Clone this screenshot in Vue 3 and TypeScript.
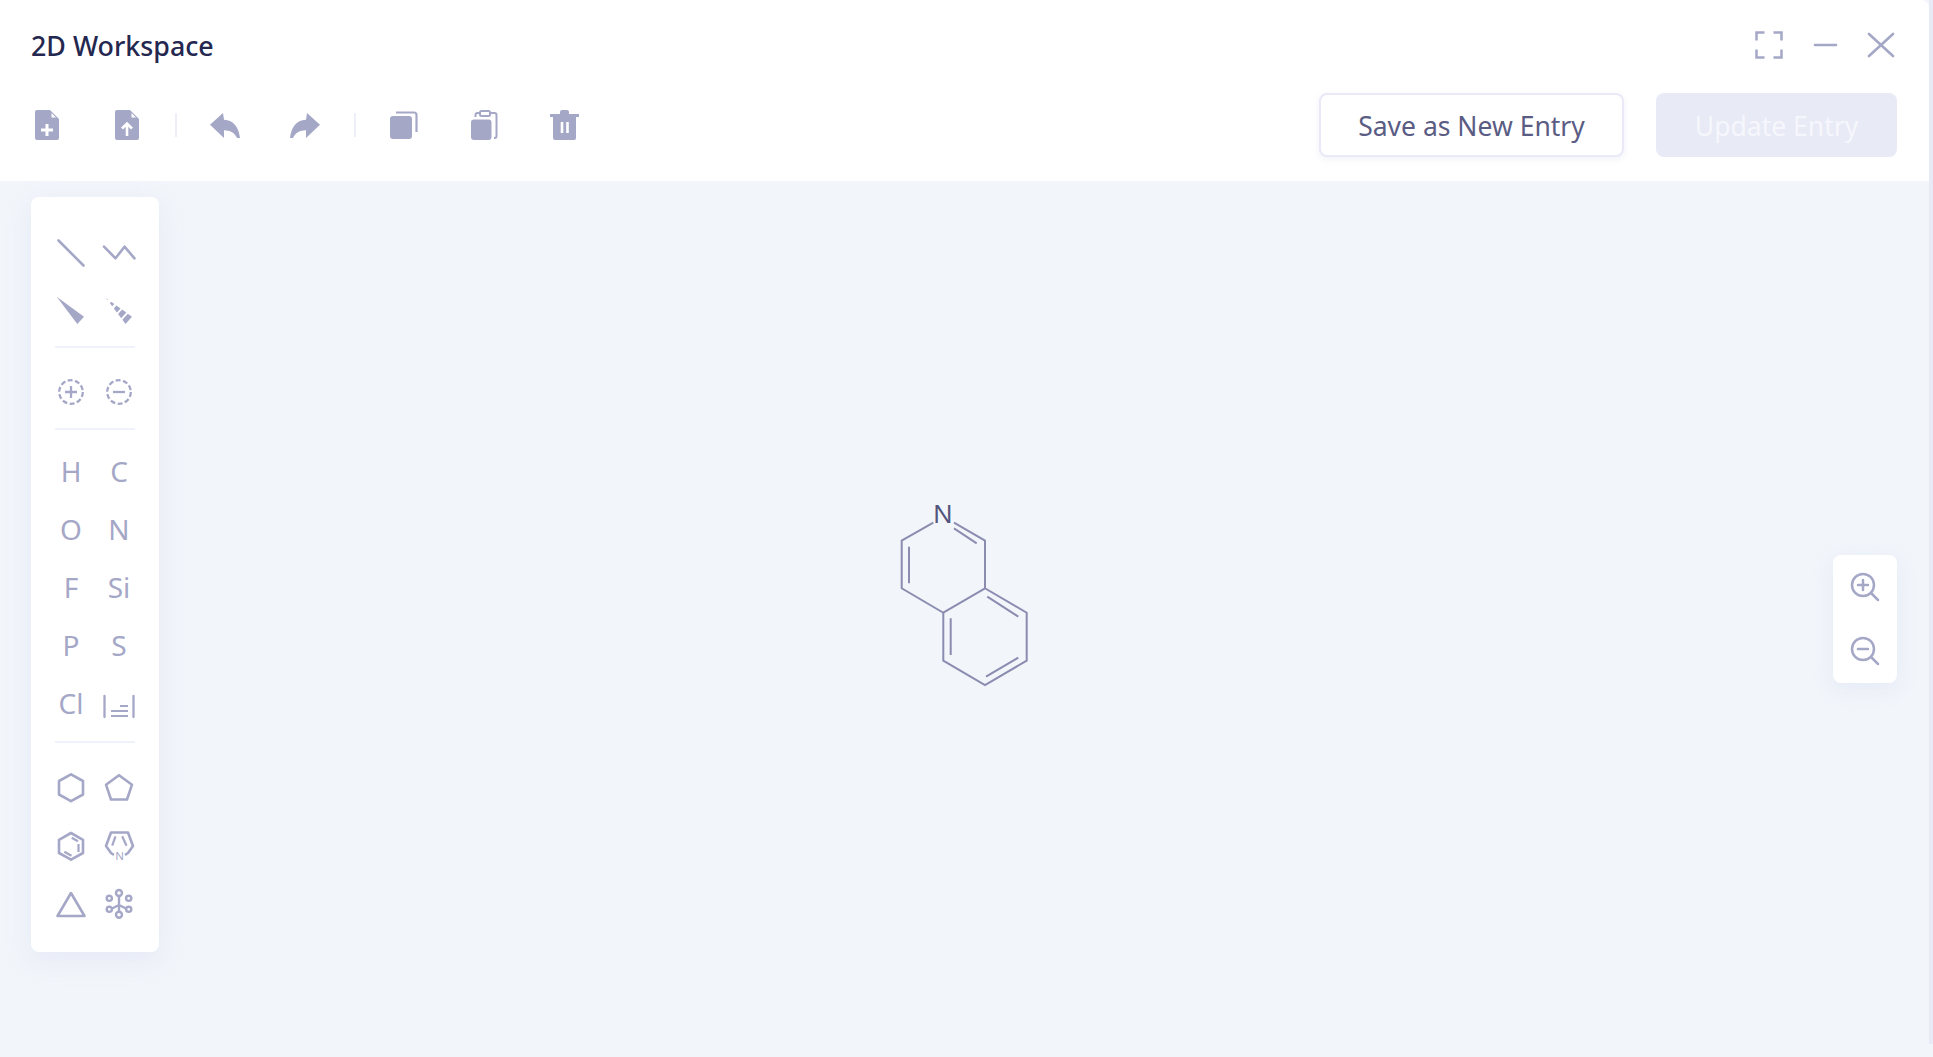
<script setup lang="ts">
const atoms = ['H', 'C', 'O', 'N', 'F', 'Si', 'P', 'S', 'Cl']
</script>

<template>
  <div class="window">
    <div class="pane">
      <header class="head">
        <div class="title-row">
          <h1 class="title">2D Workspace</h1>
          <div class="win-ctl">
            <svg width="28" height="28" viewBox="0 0 28 28" fill="none" stroke="#a5a7c7" stroke-width="2.5">
              <path d="M9.500 1.500H1.500V9.500M18.500 1.500H26.500V9.500M1.500 18.500V26.500H9.500M26.500 18.500V26.500H18.500" />
            </svg>
            <svg width="28" height="28" viewBox="0 0 28 28" fill="none" stroke="#a5a7c7" stroke-width="2.6">
              <path d="M4 14H25" stroke-linecap="round" />
            </svg>
            <svg width="28" height="28" viewBox="0 0 28 28" fill="none" stroke="#a5a7c7" stroke-width="2.6">
              <path d="M2 3L26 25M26 3L2 25" stroke-linecap="round" />
            </svg>
          </div>
        </div>
        <div class="tool-row">
          <div class="tools">
            <button class="tool">
              <svg width="24" height="30" viewBox="0 0 24 30">
                <path fill="#a5a7c7" d="M2 0H15L24 9V28a2 2 0 0 1-2 2H2a2 2 0 0 1-2-2V2a2 2 0 0 1 2-2z" />
                <path fill="#fff" d="M16.500 3L21 7.500H16.500z" />
                <path stroke="#fff" stroke-width="3" d="M12 14V26M6 20H18" />
              </svg>
            </button>
            <button class="tool">
              <svg width="24" height="30" viewBox="0 0 24 30">
                <path fill="#a5a7c7" d="M2 0H15L24 9V28a2 2 0 0 1-2 2H2a2 2 0 0 1-2-2V2a2 2 0 0 1 2-2z" />
                <path fill="#fff" d="M16.500 3L21 7.500H16.500z" />
                <path stroke="#fff" stroke-width="2.6" fill="none" d="M12 26V14M7 18.500L12 13.500L17 18.500" />
              </svg>
            </button>
            <span class="sep first"></span>
            <button class="tool">
              <svg width="30" height="25" viewBox="0 0 30 25">
                <path fill="#a5a7c7" d="M13 0L14 6.700C24 7 29 15 30 25H27C25 20 20 17.300 14 17.300V25L0 11.700z" />
              </svg>
            </button>
            <button class="tool">
              <svg width="30" height="25" viewBox="0 0 30 25">
                <path fill="#a5a7c7" d="M17 0L16 6.700C6 7 1 15 0 25H3C5 20 10 17.300 16 17.300V25L30 11.700z" />
              </svg>
            </button>
            <span class="sep second"></span>
            <button class="tool">
              <svg width="28" height="28" viewBox="0 0 28 28">
                <rect x="0" y="5" width="22" height="23" rx="3" fill="#a5a7c7" />
                <path d="M6 1.500H24A2.500 2.500 0 0 1 26.500 4V21" fill="none" stroke="#a5a7c7" stroke-width="2.2" />
              </svg>
            </button>
            <button class="tool">
              <svg width="27" height="30" viewBox="0 0 27 30">
                <rect x="0" y="9.500" width="20.500" height="20.500" rx="3" fill="#a5a7c7" />
                <path d="M4.500 7V5a2 2 0 0 1 2-2H9M19 3H23.500a2 2 0 0 1 2 2V26a2 2 0 0 1-2 2H23" fill="none" stroke="#a5a7c7" stroke-width="2" />
                <rect x="9" y="1" width="10" height="5" rx="1.500" fill="#fff" stroke="#a5a7c7" stroke-width="2" />
              </svg>
            </button>
            <button class="tool">
              <svg width="29" height="30" viewBox="0 0 29 30">
                <path fill="#a5a7c7" d="M0 4H29V7H0zM10 4V2a2 2 0 0 1 2-2H17a2 2 0 0 1 2 2V4zM3 7H26V28a2 2 0 0 1-2 2H5a2 2 0 0 1-2-2z" />
                <path stroke="#fff" stroke-width="2.600" d="M12 12V23M17.500 12V23" />
              </svg>
            </button>
          </div>
          <div class="actions">
            <button class="btn outline">Save as New Entry</button>
            <button class="btn disabled">Update Entry</button>
          </div>
        </div>
      </header>

      <main class="canvas">
        <aside class="palette">
          <div class="pal-grid">
            <svg class="ic" viewBox="0 0 32 32"><path d="M3.500 3.500L28.500 28.500" stroke="#a5a7c7" stroke-width="2.6" stroke-linecap="round" /></svg>
            <svg class="ic" viewBox="0 0 32 32"><path d="M1 9.700L12.500 21.300L21.500 9.700L31.500 21.300" fill="none" stroke="#a5a7c7" stroke-width="2.6" stroke-linecap="round" stroke-linejoin="round" /></svg>
            <svg class="ic" viewBox="0 0 32 32"><path d="M1.700 1.700L29 21.700L22.300 29z" fill="#a5a7c7" /></svg>
            <svg class="ic" viewBox="0 0 32 32">
              <path d="M3 3L5.080 4.500L4.560 5.080zM8.200 6.740L11.300 9L9.200 11.300L6.900 8.200zM13.400 10.500L17.600 13.500L13.900 17.600L10.800 13.400zM19.100 14.600L23.300 17.600L18.200 23.300L15.100 19.100zM24.800 18.700L29 21.700L22.500 29L19.400 24.800z" fill="#a5a7c7" />
            </svg>
          </div>
          <hr class="rule" />
          <div class="pal-grid">
            <svg class="ic" viewBox="0 0 32 32" fill="none" stroke="#a5a7c7"><circle cx="16" cy="16" r="11.800" stroke-width="2.3" stroke-dasharray="5 2.410" /><path d="M16 10V22M10 16H22" stroke-width="2.300" /></svg>
            <svg class="ic" viewBox="0 0 32 32" fill="none" stroke="#a5a7c7"><circle cx="16" cy="16" r="11.800" stroke-width="2.3" stroke-dasharray="5 2.410" /><path d="M10 16H22" stroke-width="2.300" /></svg>
          </div>
          <hr class="rule to-atoms" />
          <div class="pal-grid">
            <span v-for="a in atoms" :key="a" class="atom">{{ a }}</span>
            <svg class="ic" viewBox="0 0 32 32" fill="none" stroke="#a5a7c7" stroke-width="2.300"><path d="M1.500 9V30M30.500 9V30" stroke-linecap="round" /><path d="M17 19H25M8 24H25M8 29H25" stroke-width="2" /></svg>
          </div>
          <hr class="rule from-atoms" />
          <div class="pal-grid">
            <svg class="ic" viewBox="0 0 32 32" fill="none" stroke="#a5a7c7" stroke-width="2.6"><path d="M16 3.300L28 10V23.500L16 30.200L4 23.500V10z" stroke-linejoin="round" /></svg>
            <svg class="ic" viewBox="0 0 32 32" fill="none" stroke="#a5a7c7" stroke-width="2.6"><path d="M16 4.200L29 13.700L24 28.500H8L3 13.700z" stroke-linejoin="round" /></svg>
            <svg class="ic" viewBox="0 0 32 32" fill="none" stroke="#a5a7c7" stroke-width="2.6"><path d="M16 4L28 10.800V24L16 30.600L4 24V10.800z" stroke-linejoin="round" /><path d="M16.700 8.800L23 12.300M23.500 15V23M9.300 22.700L16.500 26.700" stroke-width="2.2" /></svg>
            <svg class="ic" viewBox="0 0 32 32" fill="none" stroke="#a5a7c7" stroke-width="2.6">
              <path d="M11 26L8 24L3 17L8 3.500H25L30 17L25 24L22 26" stroke-linejoin="round" />
              <path d="M12.500 7.300L9.200 16.700M19.200 7.300L23.500 16.700" stroke-width="2.2" />
              <text x="16.500" y="31" font-size="11.500" text-anchor="middle" fill="#a5a7c7" stroke="none" font-family="Noto Sans, sans-serif">N</text>
            </svg>
            <svg class="ic" viewBox="0 0 32 32" fill="none" stroke="#a5a7c7" stroke-width="2.6"><path d="M16 6L29.500 29H2.500z" stroke-linejoin="round" /></svg>
            <svg class="ic" viewBox="0 0 32 32" fill="none" stroke="#a5a7c7" stroke-width="2.4">
              <circle cx="16" cy="6" r="3" />
              <circle cx="16" cy="27.700" r="3" />
              <circle cx="6.300" cy="11.300" r="2.600" />
              <circle cx="6.300" cy="22.300" r="2.600" />
              <circle cx="25.700" cy="11.300" r="2.600" />
              <circle cx="25.700" cy="22.300" r="2.600" />
              <path d="M16 9V24.700M16 18L9 21.500M16 18L23 21.500" />
            </svg>
          </div>
        </aside>

        <svg class="molecule" width="130" height="190" viewBox="0 0 130 190" fill="none" stroke="#8a8cb0" stroke-width="2">
          <path d="M33.300 22.700L1.700 40.700V88.300L43.300 112.700V160.700L85 185L126.700 160.700V112.700L85 88.300V40.700L54 22.700M43.300 112.700L85 88.300" />
          <path d="M9 46.700V83.300M54 28.300L76.700 43.300M50.700 118.300V155M87.300 96.700L118.300 116.700M118.300 157.700L86 176.700" />
          <text x="43" y="23.300" text-anchor="middle" fill="#53557c" stroke="none" font-size="26" font-family="Noto Sans, sans-serif">N</text>
        </svg>

        <div class="zoom">
          <svg width="30" height="30" viewBox="0 0 30 30" fill="none" stroke="#a5a7c7" stroke-width="2.5"><circle cx="13" cy="13" r="11" /><path d="M21 21L28 28M13 8V18M8 13H18" stroke-linecap="round" /></svg>
          <svg width="30" height="30" viewBox="0 0 30 30" fill="none" stroke="#a5a7c7" stroke-width="2.5"><circle cx="13" cy="13" r="11" /><path d="M21 21L28 28M8 13H18" stroke-linecap="round" /></svg>
        </div>
      </main>
    </div>
    <div class="edge"></div>
  </div>
</template>

<style>
html,
body {
  margin: 0;
  height: 100%;
  overflow: hidden;
  background: #f2f5fa;
}
</style>

<style scoped>
.window {
  width: 1933px;
  height: 1057px;
  display: flex;
  background: #f2f5fa;
  font-family: "Noto Sans", "Open Sans", sans-serif;
}
.pane {
  width: 1929px;
  display: flex;
  flex-direction: column;
}
.edge {
  width: 4px;
  height: 1044px;
  background: #e8eaf6;
}
.head {
  height: 181px;
  box-sizing: border-box;
  background: #fff;
  border-top-right-radius: 8px;
  padding: 29px 32px 0 31px;
  flex: none;
}
.title-row {
  display: flex;
  justify-content: space-between;
  align-items: center;
  height: 32px;
}
.title {
  margin: 0;
  font-size: 26.8px;
  font-weight: 500;
  color: #24274f;
}
.win-ctl {
  display: flex;
  gap: 28px;
  margin-right: 2px;
}
.tool-row {
  display: flex;
  justify-content: space-between;
  align-items: center;
  margin-top: 32px;
}
.tools {
  display: flex;
  align-items: center;
}
.tool {
  width: 32px;
  height: 36px;
  padding: 0;
  border: 0;
  background: none;
  display: flex;
  align-items: center;
  justify-content: center;
}
.tool + .tool {
  margin-left: 48px;
}
.sep {
  width: 2px;
  height: 24px;
  background: #eef0f9;
}
.sep.first {
  margin: 0 32px;
}
.sep.second {
  margin: 0 32px 0 33px;
}
.actions {
  display: flex;
  gap: 32px;
}
.btn {
  height: 64px;
  border-radius: 8px;
  font-family: inherit;
  font-size: 26.5px;
  padding: 2px 0 0;
}
.outline {
  width: 305px;
  background: #fff;
  border: 2px solid #e9e9f8;
  color: #5a5c83;
  box-shadow: 0 2px 6px rgba(200, 204, 235, 0.25);
}
.disabled {
  width: 241px;
  background: #e8eaf6;
  border: 0;
  color: #f6f7fc;
}
.canvas {
  flex: 1;
  position: relative;
  padding: 16px 0 0 31px;
}
.palette {
  width: 128px;
  height: 755px;
  box-sizing: border-box;
  background: #fff;
  border-radius: 8px;
  box-shadow: 0 8px 24px rgba(200, 208, 240, 0.3);
  padding: 40px 16px 0;
}
.pal-grid {
  display: grid;
  grid-template-columns: 48px 48px;
  row-gap: 26px;
  justify-items: center;
}
.ic {
  width: 32px;
  height: 32px;
  display: block;
  overflow: visible;
}
.atom {
  height: 32px;
  font-size: 28px;
  line-height: 32px;
  text-align: center;
  white-space: nowrap;
  color: #a5a7c7;
}
.rule {
  width: 80px;
  height: 2px;
  border: 0;
  background: #eff2fb;
  margin: 19px auto 28px;
}
.to-atoms {
  margin: 20px auto 25px;
}
.from-atoms {
  margin: 22px auto 28px;
}
.molecule {
  position: absolute;
  left: 900px;
  top: 319px;
  overflow: visible;
}
.zoom {
  position: absolute;
  right: 32px;
  top: 374px;
  width: 64px;
  height: 128px;
  box-sizing: border-box;
  background: #fff;
  border-radius: 8px;
  box-shadow: 0 6px 20px rgba(200, 208, 240, 0.3);
  display: flex;
  flex-direction: column;
  align-items: center;
  padding-top: 17px;
  gap: 34px;
}
</style>
